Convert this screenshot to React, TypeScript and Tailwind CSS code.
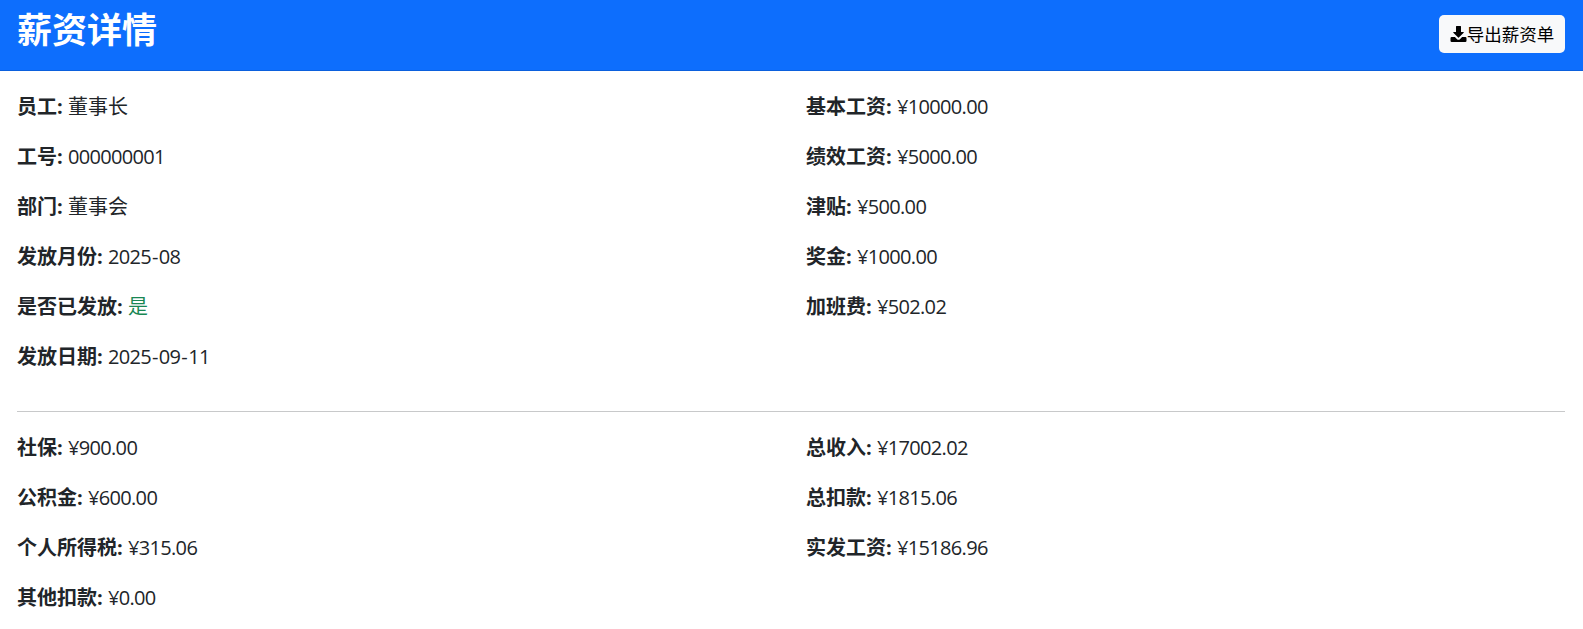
import React from "react";

const V = ({ v }: { v: string }) => {
  const parts = v.split("-");
  return (
    <span className="tracking-[-0.66px]">
      {parts.map((p, i) => (
        <React.Fragment key={i}>
          {i > 0 && <span className="mx-[1px]">-</span>}
          {p}
        </React.Fragment>
      ))}
    </span>
  );
};

const L = ({ k, v, green, cjk }: { k: string; v: string; green?: boolean; cjk?: boolean }) => (
  <p className="mb-5 text-[#212529]">
    <strong className="font-bold">{k}:</strong>{" "}
    {green ? <span className="text-[#198754]">{v}</span> : cjk ? <span>{v}</span> : <V v={v} />}
  </p>
);

export default function App() {
  return (
    <div
      className="min-h-[629px] bg-white text-[20px] leading-[30px] text-[#212529]"
      style={{ fontFamily: "'Open Sans','Noto Sans CJK SC',sans-serif" }}
    >
      <div className="flex h-[71px] items-center justify-between border-b border-[rgba(0,0,0,0.125)] bg-[#0d6efd] pl-[17px] pr-[18px]">
        <h3 className="mb-[10px] text-[35px] font-bold leading-[42px] text-white">薪资详情</h3>
        <button className="mb-[2px] flex h-[38px] w-[126px] items-center justify-center rounded-[5px] bg-[#f8f9fa] pb-[1px] text-[17.5px] leading-[26px] text-black">
          <svg width="17" height="16" viewBox="0 0 16 16" fill="currentColor">
            <path d="M6 0h4a.5.5 0 0 1 .5.5V6h2.3c.45 0 .67.54.35.85L8.35 11.6a.5.5 0 0 1-.7 0L2.85 6.85A.5.5 0 0 1 3.2 6h2.3V.5A.5.5 0 0 1 6 0z" />
            <path d="M0 12.2A1.2 1.2 0 0 1 1.2 11h3.2l1.9 1.9a2.4 2.4 0 0 0 3.4 0L11.6 11h3.2a1.2 1.2 0 0 1 1.2 1.2v2.6a1.2 1.2 0 0 1-1.2 1.2H1.2A1.2 1.2 0 0 1 0 14.8z" />
          </svg>
          导出薪资单
        </button>
      </div>
      <div className="pl-[17px] pr-[18px] pt-[21px]">
        <div className="grid grid-cols-2 gap-x-[30px]">
          <div>
            <L k="员工" v="董事长" cjk />
            <L k="工号" v="000000001" />
            <L k="部门" v="董事会" cjk />
            <L k="发放月份" v="2025-08" />
            <L k="是否已发放" v="是" green />
            <L k="发放日期" v="2025-09-11" />
          </div>
          <div>
            <L k="基本工资" v="¥10000.00" />
            <L k="绩效工资" v="¥5000.00" />
            <L k="津贴" v="¥500.00" />
            <L k="奖金" v="¥1000.00" />
            <L k="加班费" v="¥502.02" />
          </div>
        </div>
        <hr className="mb-[21px] mt-[19px] border-t border-[#c8c9ca]" />
        <div className="grid grid-cols-2 gap-x-[30px]">
          <div>
            <L k="社保" v="¥900.00" />
            <L k="公积金" v="¥600.00" />
            <L k="个人所得税" v="¥315.06" />
            <L k="其他扣款" v="¥0.00" />
          </div>
          <div>
            <L k="总收入" v="¥17002.02" />
            <L k="总扣款" v="¥1815.06" />
            <L k="实发工资" v="¥15186.96" />
          </div>
        </div>
      </div>
    </div>
  );
}
